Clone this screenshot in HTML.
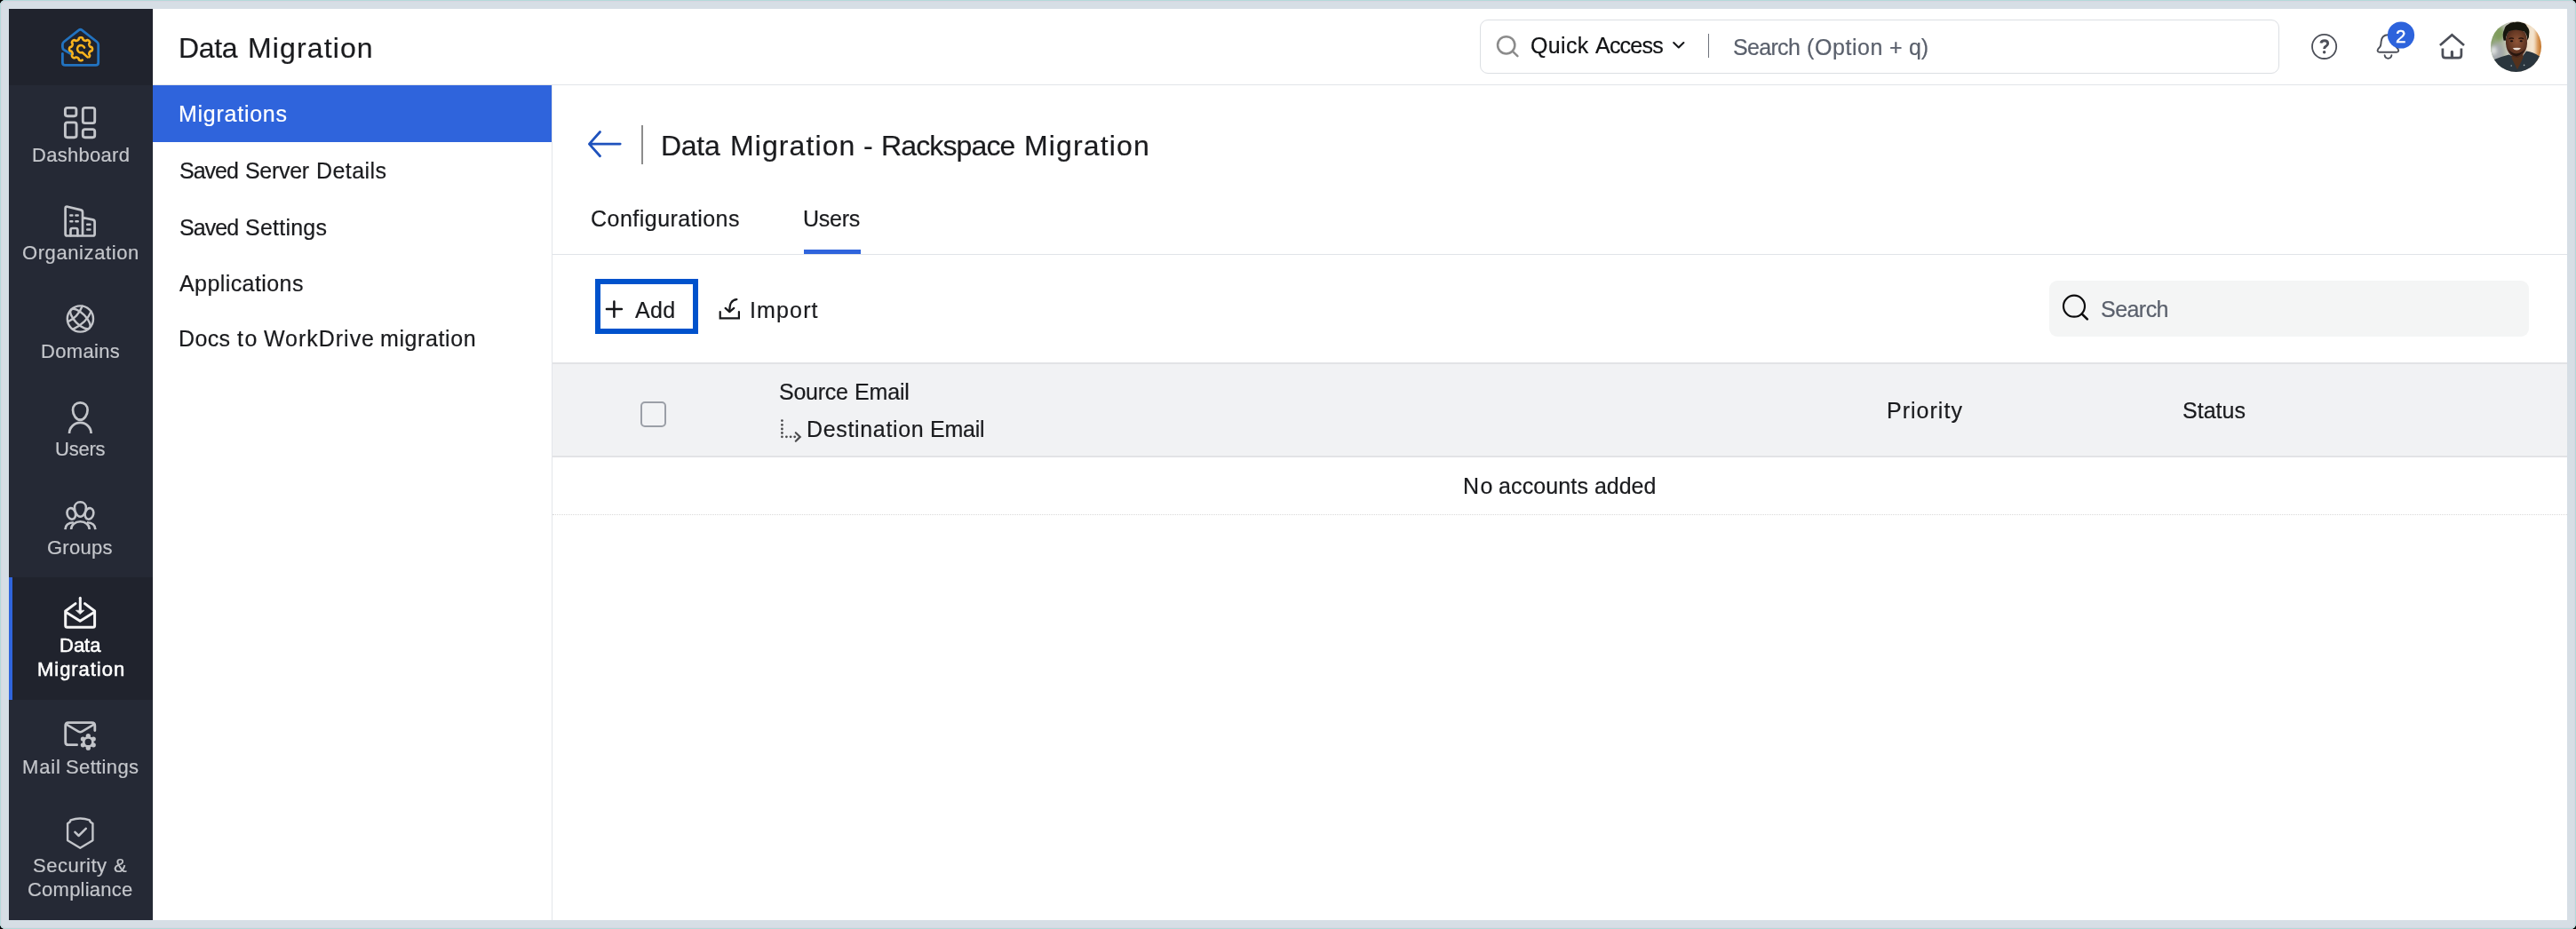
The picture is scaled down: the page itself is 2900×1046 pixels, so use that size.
<!DOCTYPE html>
<html lang="en"><head><meta charset="utf-8"><title>Data Migration - Zoho Mail Admin Console</title>
<style>
html,body{margin:0;padding:0;}
html{background:#000;}
body{position:relative;width:2900px;height:1046px;overflow:hidden;background:#000;font-family:"Liberation Sans",sans-serif;}
div,svg{position:absolute;box-sizing:border-box;}
svg{overflow:visible;}
.t{will-change:transform;-webkit-text-stroke:0.2px currentColor;white-space:pre;font-family:"Liberation Sans",sans-serif;font-weight:400;}
#frame{left:0;top:0;width:2900px;height:1046px;background:#d6dee5;border-radius:6px;box-shadow:inset 0 0 0 1px #b3dad9, inset 0 0 0 2px #d8d6e1;}
#app{left:10px;top:10px;width:2880px;height:1026px;background:#fff;}
#sidebar{left:10px;top:10px;width:162px;height:1026px;background:#252935;}
#logo{left:10px;top:10px;width:162px;height:86px;background:#20232d;}
#active{left:10px;top:650px;width:162px;height:138px;background:#20232d;}
#activebar{left:10px;top:650px;width:4px;height:138px;background:#2f64dc;}
#hdrline{left:172px;top:95px;width:2718px;height:1px;background:#e1e4e8;}
#navsel{left:172px;top:96px;width:449px;height:64px;background:#2f64dc;}
#navline{left:621px;top:96px;width:1px;height:940px;background:#e3e6ea;}
#qbox{left:1666px;top:22px;width:900px;height:61px;border:1px solid #dcdfe3;border-radius:9px;background:#fff;}
#qdiv{left:1923px;top:38px;width:1.4px;height:27px;background:#70737c;}
#avatar{left:2804px;top:24px;width:57px;height:57px;border-radius:50%;overflow:hidden;}
#tdiv{left:722px;top:141px;width:2px;height:44px;background:#8c8c8c;}
#tabline{left:622px;top:286px;width:2268px;height:1px;background:#e1e4e8;}
#tabsel{left:905px;top:281px;width:64px;height:5px;background:#2f64dc;}
#addbox{left:670px;top:314px;width:116px;height:62px;border:6px solid #0052cc;}
#sbox{left:2307px;top:316px;width:540px;height:63px;background:#f4f5f5;border-radius:9px;}
#thead{left:622px;top:408px;width:2268px;height:107px;background:#f1f2f4;border-top:2px solid #e2e3e6;border-bottom:2px solid #e2e3e6;}
#cb{left:721px;top:452px;width:28.5px;height:28.5px;border:2px solid #9b9fa7;border-radius:5px;background:#f2f3f5;}
#rowline{left:622px;top:579px;width:2268px;height:0;border-top:1px dotted #d9d9d9;}

</style></head>
<body>
<div id="frame"></div>
<div id="app"></div>
<div id="sidebar"></div>
<div id="logo"></div>
<div id="active"></div>
<div id="activebar"></div>
<div id="hdrline"></div>
<div id="navsel"></div>
<div id="navline"></div>
<div id="qbox"></div>
<div id="qdiv"></div>
<div id="tdiv"></div>
<div id="tabline"></div>
<div id="tabsel"></div>
<div id="addbox"></div>
<div id="sbox"></div>
<div id="thead"></div>
<div id="cb"></div>
<div id="rowline"></div>

<svg id="sbicons" style="left:0;top:0" width="180" height="1046" viewBox="0 0 180 1046" fill="none" stroke-linecap="round" stroke-linejoin="round">
<g stroke="#2273c0" stroke-width="2.8"><path d="M79.6 60.6 L72.2 56.3 Q70.4 55.2 70.4 53.0 L70.4 50.2 Q70.4 48.2 72.0 47.0 L88.8 33.9 Q90.5 32.6 92.2 33.9 L109.0 47.0 Q110.7 48.3 110.7 50.3 L110.7 70.4 Q110.7 73.4 107.7 73.4 L73.4 73.4 Q70.4 73.4 70.4 70.4 L70.4 60.4"/></g>
<g stroke="#f9b31e" stroke-width="2.6"><path d="M92.75 67.67 L92.59 67.78 L92.42 67.87 L92.25 67.95 L92.07 68.02 L91.89 68.08 L91.72 68.12 L91.54 68.16 L91.35 68.18 L91.17 68.20 L90.99 68.20 L90.81 68.19 L90.62 68.18 L90.44 68.15 L90.26 68.12 L90.08 68.07 L89.91 68.01 L89.73 67.95 L89.56 67.86 L89.39 67.77 L89.23 67.66 L89.07 67.53 L88.92 67.37 L88.78 67.16 L88.74 66.51 L88.65 66.15 L88.53 65.95 L88.41 65.79 L88.29 65.65 L88.16 65.53 L88.04 65.42 L87.91 65.32 L87.79 65.23 L87.66 65.14 L87.53 65.06 L87.40 64.99 L87.27 64.92 L87.14 64.86 L87.00 64.80 L86.87 64.75 L86.73 64.70 L86.59 64.66 L86.44 64.62 L86.30 64.59 L86.15 64.56 L85.99 64.54 L85.83 64.52 L85.66 64.51 L85.49 64.51 L85.30 64.52 L85.10 64.55 L84.87 64.63 L84.37 65.08 L84.05 65.25 L83.82 65.28 L83.60 65.28 L83.40 65.26 L83.21 65.22 L83.02 65.16 L82.85 65.09 L82.68 65.02 L82.51 64.93 L82.35 64.83 L82.20 64.73 L82.06 64.62 L81.92 64.50 L81.79 64.37 L81.66 64.24 L81.55 64.10 L81.44 63.95 L81.33 63.80 L81.24 63.64 L81.16 63.47 L81.08 63.30 L81.02 63.12 L80.97 62.93 L80.93 62.74 L80.91 62.53 L80.92 62.31 L80.98 62.06 L81.44 61.55 L81.61 61.25 L81.66 61.03 L81.68 60.84 L81.69 60.66 L81.69 60.48 L81.68 60.32 L81.66 60.16 L81.63 60.01 L81.60 59.86 L81.57 59.71 L81.53 59.57 L81.48 59.42 L81.43 59.29 L81.38 59.15 L81.32 59.02 L81.26 58.89 L81.19 58.76 L81.11 58.63 L81.03 58.50 L80.94 58.37 L80.85 58.25 L80.74 58.12 L80.63 58.00 L80.51 57.87 L80.36 57.75 L80.20 57.63 L79.97 57.52 L79.27 57.49 L78.96 57.38 L78.77 57.24 L78.63 57.08 L78.50 56.92 L78.40 56.76 L78.31 56.59 L78.23 56.41 L78.17 56.24 L78.11 56.06 L78.07 55.88 L78.04 55.70 L78.02 55.52 L78.00 55.33 L78.00 55.15 L78.01 54.97 L78.03 54.79 L78.05 54.61 L78.09 54.43 L78.14 54.25 L78.20 54.07 L78.27 53.90 L78.35 53.73 L78.45 53.56 L78.56 53.39 L78.70 53.24 L78.86 53.09 L79.09 52.96 L79.81 52.93 L80.10 52.83 L80.29 52.71 L80.44 52.59 L80.57 52.46 L80.69 52.34 L80.80 52.21 L80.90 52.09 L80.99 51.96 L81.07 51.83 L81.15 51.71 L81.22 51.58 L81.29 51.45 L81.35 51.31 L81.41 51.18 L81.46 51.04 L81.51 50.90 L81.55 50.76 L81.59 50.62 L81.62 50.47 L81.65 50.31 L81.67 50.16 L81.68 50.00 L81.69 49.83 L81.69 49.65 L81.67 49.46 L81.64 49.26 L81.55 49.01 L81.06 48.49 L80.94 48.20 L80.91 47.97 L80.92 47.76 L80.95 47.56 L80.99 47.37 L81.05 47.19 L81.12 47.01 L81.20 46.84 L81.29 46.68 L81.39 46.52 L81.49 46.37 L81.61 46.23 L81.73 46.09 L81.85 45.96 L81.99 45.84 L82.13 45.72 L82.28 45.62 L82.43 45.52 L82.60 45.42 L82.76 45.34 L82.94 45.27 L83.12 45.21 L83.31 45.16 L83.50 45.13 L83.71 45.11 L83.94 45.13 L84.20 45.21 L84.73 45.70 L84.99 45.82 L85.21 45.87 L85.40 45.89 L85.58 45.89 L85.75 45.89 L85.91 45.87 L86.07 45.85 L86.22 45.83 L86.37 45.80 L86.52 45.76 L86.66 45.72 L86.80 45.67 L86.94 45.62 L87.08 45.57 L87.21 45.51 L87.34 45.44 L87.47 45.37 L87.60 45.29 L87.73 45.21 L87.85 45.12 L87.98 45.03 L88.11 44.92 L88.23 44.81 L88.35 44.68 L88.48 44.53 L88.59 44.36 L88.70 44.11 L88.72 43.38 L88.85 43.12 L88.99 42.94 L89.15 42.80 L89.31 42.68 L89.48 42.58 L89.65 42.49 L89.82 42.42 L90.00 42.36 L90.18 42.30 L90.36 42.26 L90.54 42.23 L90.72 42.21 L90.90 42.20 L91.08 42.20 L91.27 42.21 L91.45 42.23 L91.63 42.26 L91.81 42.30 L91.99 42.35 L92.16 42.41 L92.34 42.49 L92.51 42.57 L92.67 42.67 L92.84 42.79 L92.99 42.93 L93.14 43.10 L93.27 43.35 L93.29 44.08 L93.40 44.34 L93.51 44.52 L93.64 44.67 L93.76 44.80 L93.88 44.91 L94.01 45.02 L94.14 45.12 L94.26 45.21 L94.39 45.29 L94.52 45.37 L94.65 45.44 L94.78 45.50 L94.91 45.56 L95.05 45.62 L95.19 45.67 L95.33 45.72 L95.47 45.76 L95.61 45.79 L95.76 45.83 L95.92 45.85 L96.07 45.87 L96.24 45.89 L96.41 45.89 L96.59 45.89 L96.78 45.87 L96.99 45.83 L97.25 45.72 L97.78 45.22 L98.05 45.13 L98.27 45.11 L98.48 45.13 L98.68 45.16 L98.87 45.20 L99.05 45.27 L99.22 45.34 L99.39 45.42 L99.55 45.51 L99.71 45.61 L99.86 45.71 L100.00 45.83 L100.13 45.95 L100.26 46.08 L100.39 46.22 L100.50 46.36 L100.61 46.51 L100.70 46.67 L100.79 46.83 L100.87 47.00 L100.94 47.17 L101.00 47.36 L101.05 47.54 L101.08 47.74 L101.09 47.95 L101.06 48.18 L100.96 48.46 L100.46 48.99 L100.37 49.24 L100.33 49.45 L100.31 49.64 L100.31 49.81 L100.32 49.98 L100.33 50.14 L100.35 50.30 L100.38 50.45 L100.41 50.60 L100.45 50.75 L100.49 50.89 L100.54 51.03 L100.59 51.17 L100.64 51.30 L100.70 51.43 L100.77 51.57 L100.84 51.70 L100.92 51.82 L101.01 51.95 L101.10 52.08 L101.19 52.20 L101.30 52.33 L101.42 52.45 L101.55 52.58 L101.70 52.70 L101.88 52.82 L102.16 52.92 L102.88 52.95 L103.12 53.08 L103.29 53.23 L103.43 53.38 L103.54 53.54 L103.64 53.71 L103.72 53.88 L103.80 54.06 L103.86 54.23 L103.91 54.41 L103.94 54.59 L103.97 54.77 L103.99 54.96 L104.00 55.14 L104.00 55.32 L103.99 55.50 L103.96 55.68 L103.93 55.87 L103.89 56.04 L103.84 56.22 L103.77 56.40 L103.70 56.57 L103.61 56.74 L103.51 56.91 L103.39 57.07 L103.24 57.22 L103.06 57.37 L102.77 57.49 L102.05 57.51 L101.82 57.62 L101.65 57.74 L101.51 57.86 L101.38 57.98 L101.27 58.11 L101.16 58.24 L101.07 58.36 L100.98 58.49 L100.90 58.62 L100.82 58.75 L100.75 58.88 L100.68 59.01 L100.62 59.14 L100.57 59.28 L100.52 59.41 L100.47 59.55 L100.43 59.70 L100.40 59.84 L100.37 59.99 L100.34 60.15 L100.32 60.31 L100.31 60.47 L100.31 60.64 L100.31 60.82 L100.34 61.02 L100.39 61.23 L100.53 61.52 L101.01 62.04 L101.07 62.29 L101.09 62.51 L101.07 62.72 L101.03 62.92 L100.98 63.10 L100.92 63.28 L100.85 63.46 L100.77 63.62 L100.67 63.78 L100.57 63.94 L100.46 64.09 L100.35 64.23"/><path d="M95.0 53.6 A4.1 4.1 0 1 0 92.6 59.0 L98.6 64.4"/></g>
<g stroke="#c3c5ca" stroke-width="2.9"><rect x="73.4" y="121.4" width="12.5" height="9.3" rx="2.4"/><rect x="93.3" y="121.4" width="13.4" height="17.2" rx="2.4"/><rect x="73.4" y="137.9" width="12.7" height="16.8" rx="2.4"/><rect x="93.3" y="145.6" width="13.4" height="9.1" rx="2.4"/></g>
<g stroke="#c3c5ca" stroke-width="2.7"><path d="M93.0 265.5 L75.6 265.5 Q73.6 265.5 73.6 263.5 L73.6 234.6 Q73.6 232.2 76.0 232.8 L91.0 236.4 Q93.0 236.9 93.0 239.0 L93.0 265.5 L104.6 265.5 Q106.6 265.5 106.6 263.5 L106.6 249.9 Q106.6 247.9 104.6 247.4 L93.0 245.0"/><path d="M79.5 265.2 L79.5 259.0 Q79.5 257.0 81.5 257.0 L85.4 257.0 Q87.4 257.0 87.4 259.0 L87.4 265.2"/></g><g stroke="#c3c5ca" stroke-width="2.5"><path d="M79.3 242.6H81.4M85.4 242.6H87.7M79.3 249.2H81.4M85.4 249.2H87.7M98.2 252.7H101.4M98.2 258.4H101.4"/></g>
<g stroke="#c3c5ca" stroke-width="2.4"><circle cx="90.4" cy="359.0" r="14.6"/><ellipse cx="90.4" cy="359.0" rx="14.6" ry="6.1" transform="rotate(45 90.4 359.0)"/><path d="M76.6 362.2 Q87.5 357.5 92.6 344.8"/><path d="M81.8 370.8 Q97.5 363.5 102.6 350.6"/></g>
<g stroke="#c3c5ca" stroke-width="2.7" stroke-linecap="butt"><path d="M90.3 453.3 C95.2 453.3 98.6 456.8 98.6 461.6 C98.6 467.4 94.6 472.7 90.3 472.7 C86.0 472.7 82.0 467.4 82.0 461.6 C82.0 456.8 85.4 453.3 90.3 453.3 Z"/><path d="M78.0 488.1 A12.3 12.2 0 0 1 102.6 488.1"/></g>
<g stroke="#c3c5ca" stroke-width="2.6" stroke-linecap="butt"><ellipse cx="80.3" cy="578.4" rx="4.7" ry="6.4" transform="rotate(-14 80.3 578.4)"/><ellipse cx="100.5" cy="578.4" rx="4.7" ry="6.4" transform="rotate(14 100.5 578.4)"/><path d="M90.4 565.2 C94.2 565.2 96.9 568.0 96.9 571.6 C96.9 576.6 93.7 581.8 90.4 581.8 C87.1 581.8 83.9 576.6 83.9 571.6 C83.9 568.0 86.6 565.2 90.4 565.2 Z" fill="#252935"/><path d="M80.1 596.1 A10.3 8.9 0 0 1 100.7 596.1"/><path d="M73.4 596.1 Q73.9 588.6 82.8 588.3"/><path d="M107.4 596.1 Q106.9 588.6 98.0 588.3"/></g>
<g stroke="#f5f5f6" stroke-width="3"><path d="M85.0 679.6 L73.7 688.0 L73.7 704.3 Q73.7 706.3 75.7 706.3 L104.6 706.3 Q106.6 706.3 106.6 704.3 L106.6 688.0 L95.5 679.6"/><path d="M74.6 689.4 L90.2 699.2 L105.8 689.4"/><path d="M90.3 673.3 L90.3 686.5"/></g><path d="M85.6 687.2 L95.0 687.2 L90.3 691.4 Z" fill="#f5f5f6" stroke="#f5f5f6" stroke-width="0.6"/>
<g stroke="#c3c5ca" stroke-width="2.8"><path d="M106.8 822.6 L106.8 816.9 Q106.8 813.6 103.5 813.6 L77.0 813.6 Q73.7 813.6 73.7 816.9 L73.7 835.4 Q73.7 838.7 77.0 838.7 L86.6 838.7"/><path d="M75.6 816.2 L88.2 823.6 Q90.3 824.8 92.4 823.6 L105.0 816.2" stroke-width="2.6"/></g><g fill="#c3c5ca" stroke="none"><circle cx="99.30" cy="828.55" r="2.6"/><circle cx="105.23" cy="831.98" r="2.6"/><circle cx="105.23" cy="838.82" r="2.6"/><circle cx="99.30" cy="842.25" r="2.6"/><circle cx="93.37" cy="838.82" r="2.6"/><circle cx="93.37" cy="831.98" r="2.6"/><circle cx="99.3" cy="835.4" r="6.4"/></g><circle cx="99.3" cy="835.4" r="3.7" fill="#252935"/>
<g stroke="#c3c5ca" stroke-width="2.4"><path d="M76.1 927.1 Q79.0 926.2 79.6 923.3 Q90.2 919.6 100.8 923.3 Q101.4 926.2 104.4 927.1 L104.4 946.3 L90.25 954.7 L76.1 946.3 Z"/><path d="M84.4 936.9 L88.6 941.0 L96.8 932.9" stroke-width="2.5"/></g>
</svg>
<svg id="hdricons" style="left:1660px;top:10px" width="1230" height="86" viewBox="1660 10 1230 86" fill="none" stroke-linecap="round" stroke-linejoin="round">
<g stroke="#8b8b8b" stroke-width="2.5"><circle cx="1695.7" cy="50.8" r="9.65"/><path d="M1702.7 57.6 L1708.4 63.2"/></g>
<path d="M1884.2 48.0 L1889.8 53.4 L1895.4 48.0" stroke="#16171a" stroke-width="2.1"/>
<circle cx="2616.6" cy="52.4" r="13.6" stroke="#4c4f58" stroke-width="1.8"/>
<path d="M2612.9 48.6 Q2613.4 45.8 2616.9 45.8 Q2620.6 45.8 2620.6 48.9 Q2620.6 50.8 2618.6 52.0 Q2616.6 53.2 2616.6 55.0" stroke="#4c4f58" stroke-width="2.9" stroke-linecap="butt"/>
<circle cx="2616.6" cy="58.7" r="1.75" fill="#4c4f58"/>
<g stroke="#4c4f58" stroke-width="1.9"><path d="M2688.4 39.2 Q2681.2 39.2 2680.6 47.0 Q2680.4 51.4 2679.4 52.6 L2677.2 55.2 Q2676.2 56.6 2676.8 57.8 Q2677.4 58.8 2679.0 58.8 L2697.8 58.8 Q2699.4 58.8 2700.0 57.8 Q2700.6 56.6 2699.6 55.2 L2697.4 52.6 Q2696.4 51.4 2696.2 47.0 Q2695.6 39.2 2688.4 39.2 Z"/><path d="M2684.6 62.2 Q2685.2 65.8 2688.5 65.8 Q2691.8 65.8 2692.4 62.2"/></g>
<circle cx="2703.0" cy="39.5" r="15.1" fill="#2d63dc"/>
<g stroke="#4c4f58" stroke-width="2.7"><path d="M2746.9 51.0 L2760.4 39.3 L2774.0 51.0" stroke-linecap="butt" stroke-linejoin="miter"/><path d="M2749.9 54.6 L2749.9 62.0 Q2749.9 65.2 2753.1 65.2 L2767.7 65.2 Q2770.9 65.2 2770.9 62.0 L2770.9 54.6" stroke-linecap="butt"/><path d="M2760.4 58.4 L2760.4 64.6" stroke-width="3.2"/></g>
</svg>
<div id="avatar"><svg style="left:0;top:0" width="57" height="57" viewBox="0 0 57 57">
<defs>
<linearGradient id="avbg" x1="0" x2="1" y1="0" y2="0"><stop offset="0" stop-color="#86a067"/><stop offset="0.2" stop-color="#a7b09a"/><stop offset="0.36" stop-color="#c9c9bf"/><stop offset="0.62" stop-color="#e6dccb"/><stop offset="0.84" stop-color="#efd9bb"/><stop offset="0.93" stop-color="#d9995a"/><stop offset="1" stop-color="#c27428"/></linearGradient>
<radialGradient id="avface" cx="0.52" cy="0.42" r="0.62"><stop offset="0" stop-color="#8f5538"/><stop offset="0.55" stop-color="#6a3b26"/><stop offset="1" stop-color="#40231a"/></radialGradient>
<filter id="avblur" x="-20%" y="-20%" width="140%" height="140%"><feGaussianBlur stdDeviation="0.55"/></filter>
<filter id="avblur2" x="-20%" y="-20%" width="140%" height="140%"><feGaussianBlur stdDeviation="2.2"/></filter>
</defs>
<rect width="57" height="57" fill="url(#avbg)"/>
<g filter="url(#avblur2)"><ellipse cx="6" cy="36" rx="9" ry="11" fill="#a5a9ad"/><ellipse cx="3" cy="33" rx="3.5" ry="4.5" fill="#e3e6e4"/><ellipse cx="9" cy="14" rx="6" ry="8" fill="#7f9c5c"/><rect x="44" y="6" width="5" height="34" fill="#f4e6d2"/></g>
<g filter="url(#avblur)">
<path d="M4 43 Q12 39.5 20.5 37.4 L24 39 L36 39 L40 33.6 Q48 34.6 55 39.4 L57 57 L0 57 Z" fill="#2a363d"/>
<path d="M24 36 L23.6 41.5 L30 54.5 L36.4 41 L36.4 34 Z" fill="#55301f"/>
<path d="M17 25 Q16.5 13 22 10.5 Q29 8 36 10.5 Q41.3 13 41 25 Q40.5 33 36 37.4 Q32 40.8 29 40.8 Q25.6 40.8 22 37.4 Q17.6 33 17 25 Z" fill="url(#avface)"/>
<path d="M19.6 31 Q22 38 29 39.6 Q36 38 38.6 30.6 Q36 35.6 29 36.6 Q22.4 35.8 19.6 31Z" fill="#26140f"/>
<path d="M14.6 21.5 Q12.6 14 15.4 9 Q16 5.5 19.6 3.6 Q22.4 0.6 27 1.2 Q31 -0.4 35 1.6 Q39.4 2 41 6 Q44.2 9.4 43.2 14 Q43.6 18.4 41.2 21.6 Q41 14.6 37.6 11.4 Q29 8.2 21 11.2 Q17 14.4 16.8 21.8 Z" fill="#181411"/>
<path d="M20.6 19.7 Q23 18.2 26 19.5 M31.4 19.5 Q34.4 18.2 37 19.7" stroke="#1d110c" stroke-width="1.3" fill="none"/>
<ellipse cx="23.6" cy="22.2" rx="1.6" ry="1" fill="#170d0a"/><ellipse cx="34.2" cy="22.2" rx="1.6" ry="1" fill="#170d0a"/>
<path d="M24.8 30.0 Q29.4 29.4 34.0 29.9 Q32.4 32.6 29.3 32.6 Q26.2 32.6 24.8 30.0Z" fill="#e9ded6"/>
<circle cx="23.2" cy="50" r="0.8" fill="#a9b3b6"/><circle cx="37.6" cy="49.4" r="0.8" fill="#a9b3b6"/>
</g>
</svg></div>
<svg id="mainicons" style="left:622px;top:96px" width="2268" height="500" viewBox="622 96 2268 500" fill="none" stroke-linecap="round" stroke-linejoin="round">
<path d="M698.2 162.1 L663.6 162.1 M675.5 148.5 L663.4 162.1 L675.5 175.7" stroke="#1f52bd" stroke-width="2.8"/>
<path d="M682.9 347.9 L699.9 347.9 M691.4 339.5 L691.4 356.8" stroke="#141518" stroke-width="2.5"/>
<g stroke="#17181b" stroke-width="2.2"><path d="M810.7 351.0 L810.7 358.3 L831.9 358.3 L831.9 351.0" stroke-linejoin="miter"/><path d="M829.4 337.1 Q821.0 337.6 821.3 350.6"/><path d="M816.6 346.9 L821.3 351.1 L826.3 346.9"/></g>
<g stroke="#0d0d0e"><circle cx="2335.0" cy="344.7" r="12.0" stroke-width="2.2"/><path d="M2343.9 353.6 L2349.8 359.4" stroke-width="2.7"/></g>
<g fill="#4b4b4d"><circle cx="880.4" cy="473.6" r="1.4"/><circle cx="880.4" cy="478.3" r="1.4"/><circle cx="880.4" cy="483.0" r="1.4"/><circle cx="880.4" cy="487.5" r="1.4"/><circle cx="880.4" cy="491.8" r="1.4"/><circle cx="885.4" cy="491.8" r="1.4"/><circle cx="890.1" cy="491.8" r="1.4"/><circle cx="894.7" cy="491.8" r="1.4"/></g><path d="M895.8 487.2 L900.7 491.9 L895.8 496.7" stroke="#4b4b4d" stroke-width="2.2" stroke-linejoin="miter"/>
</svg>
<!-- text -->
<div class="t" style="left:35.60px;top:164px;font-size:22px;line-height:22px;letter-spacing:0.289px;color:#c4c6cb;">Dashboard</div>
<div class="t" style="left:24.80px;top:274px;font-size:22px;line-height:22px;letter-spacing:0.591px;color:#c4c6cb;">Organization</div>
<div class="t" style="left:45.90px;top:385px;font-size:22px;line-height:22px;letter-spacing:0.332px;color:#c4c6cb;">Domains</div>
<div class="t" style="left:61.70px;top:495px;font-size:22px;line-height:22px;letter-spacing:-0.237px;color:#c4c6cb;">Users</div>
<div class="t" style="left:53.10px;top:606px;font-size:22px;line-height:22px;letter-spacing:0.251px;color:#c4c6cb;">Groups</div>
<div class="t" style="left:66.60px;top:716px;font-size:22px;line-height:22px;letter-spacing:-0.012px;color:#ffffff;-webkit-text-stroke:0.55px #fff;">Data</div>
<div class="t" style="left:41.80px;top:743px;font-size:22px;line-height:22px;letter-spacing:0.957px;color:#ffffff;-webkit-text-stroke:0.55px #fff;">Migration</div>
<div class="t" style="left:24.60px;top:853px;font-size:22px;line-height:22px;letter-spacing:0.817px;color:#c4c6cb;">Mail</div>
<div class="t" style="left:73.90px;top:853px;font-size:22px;line-height:22px;letter-spacing:0.358px;color:#c4c6cb;">Settings</div>
<div class="t" style="left:37.10px;top:964px;font-size:22px;line-height:22px;letter-spacing:0.504px;color:#c4c6cb;">Security</div>
<div class="t" style="left:127.50px;top:964px;font-size:22px;line-height:22px;letter-spacing:-0.100px;color:#c4c6cb;">&amp;</div>
<div class="t" style="left:31.00px;top:991px;font-size:22px;line-height:22px;letter-spacing:0.230px;color:#c4c6cb;">Compliance</div>
<div class="t" style="left:201.10px;top:38px;font-size:32px;line-height:32px;letter-spacing:-0.332px;color:#1a1b1e;">Data</div>
<div class="t" style="left:278.80px;top:38px;font-size:32px;line-height:32px;letter-spacing:1.123px;color:#1a1b1e;">Migration</div>
<div class="t" style="left:1723.00px;top:39px;font-size:25px;line-height:25px;letter-spacing:0.324px;color:#111214;">Quick</div>
<div class="t" style="left:1796.30px;top:39px;font-size:25px;line-height:25px;letter-spacing:-0.776px;color:#111214;">Access</div>
<div class="t" style="left:1951.10px;top:41px;font-size:25px;line-height:25px;letter-spacing:-0.682px;color:#5a606c;">Search</div>
<div class="t" style="left:2034.20px;top:41px;font-size:25px;line-height:25px;letter-spacing:0.587px;color:#5a606c;">(Option</div>
<div class="t" style="left:2126.90px;top:41px;font-size:25px;line-height:25px;letter-spacing:-0.300px;color:#5a606c;">+</div>
<div class="t" style="left:2148.90px;top:41px;font-size:25px;line-height:25px;letter-spacing:-0.204px;color:#5a606c;">q)</div>
<div class="t" style="left:201.00px;top:116px;font-size:25px;line-height:25px;letter-spacing:0.742px;color:#ffffff;">Migrations</div>
<div class="t" style="left:201.60px;top:180px;font-size:25px;line-height:25px;letter-spacing:-0.996px;color:#1a1b1e;">Saved</div>
<div class="t" style="left:276.10px;top:180px;font-size:25px;line-height:25px;letter-spacing:-0.302px;color:#1a1b1e;">Server</div>
<div class="t" style="left:355.70px;top:180px;font-size:25px;line-height:25px;letter-spacing:0.447px;color:#1a1b1e;">Details</div>
<div class="t" style="left:201.60px;top:244px;font-size:25px;line-height:25px;letter-spacing:-0.921px;color:#1a1b1e;">Saved</div>
<div class="t" style="left:275.80px;top:244px;font-size:25px;line-height:25px;letter-spacing:0.238px;color:#1a1b1e;">Settings</div>
<div class="t" style="left:202.20px;top:307px;font-size:25px;line-height:25px;letter-spacing:0.418px;color:#1a1b1e;">Applications</div>
<div class="t" style="left:200.60px;top:369px;font-size:25px;line-height:25px;letter-spacing:0.381px;color:#1a1b1e;">Docs</div>
<div class="t" style="left:267.23px;top:369px;font-size:25px;line-height:25px;letter-spacing:1.500px;color:#1a1b1e;">to</div>
<div class="t" style="left:297.10px;top:369px;font-size:25px;line-height:25px;letter-spacing:0.974px;color:#1a1b1e;">WorkDrive</div>
<div class="t" style="left:427.70px;top:369px;font-size:25px;line-height:25px;letter-spacing:0.610px;color:#1a1b1e;">migration</div>
<div class="t" style="left:743.80px;top:148px;font-size:32px;line-height:32px;letter-spacing:-0.299px;color:#1a1b1e;">Data</div>
<div class="t" style="left:821.70px;top:148px;font-size:32px;line-height:32px;letter-spacing:1.098px;color:#1a1b1e;">Migration</div>
<div class="t" style="left:971.60px;top:148px;font-size:32px;line-height:32px;letter-spacing:-0.600px;color:#1a1b1e;">-</div>
<div class="t" style="left:991.90px;top:148px;font-size:32px;line-height:32px;letter-spacing:-0.863px;color:#1a1b1e;">Rackspace</div>
<div class="t" style="left:1152.80px;top:148px;font-size:32px;line-height:32px;letter-spacing:1.148px;color:#1a1b1e;">Migration</div>
<div class="t" style="left:665.00px;top:234px;font-size:25px;line-height:25px;letter-spacing:0.484px;color:#1a1b1e;">Configurations</div>
<div class="t" style="left:904.20px;top:234px;font-size:25px;line-height:25px;letter-spacing:-0.271px;color:#1a1b1e;">Users</div>
<div class="t" style="left:715.00px;top:337px;font-size:25px;line-height:25px;letter-spacing:0.361px;color:#1a1b1e;">Add</div>
<div class="t" style="left:843.70px;top:337px;font-size:25px;line-height:25px;letter-spacing:1.139px;color:#1a1b1e;">Import</div>
<div class="t" style="left:2365.20px;top:336px;font-size:25px;line-height:25px;letter-spacing:-0.542px;color:#5a606c;">Search</div>
<div class="t" style="left:877.20px;top:429px;font-size:25px;line-height:25px;letter-spacing:-0.262px;color:#1a1b1e;">Source</div>
<div class="t" style="left:961.90px;top:429px;font-size:25px;line-height:25px;letter-spacing:-0.165px;color:#1a1b1e;">Email</div>
<div class="t" style="left:908.30px;top:471px;font-size:25px;line-height:25px;letter-spacing:0.663px;color:#1a1b1e;">Destination</div>
<div class="t" style="left:1047.30px;top:471px;font-size:25px;line-height:25px;letter-spacing:-0.240px;color:#1a1b1e;">Email</div>
<div class="t" style="left:2123.70px;top:450px;font-size:25px;line-height:25px;letter-spacing:1.017px;color:#1a1b1e;">Priority</div>
<div class="t" style="left:2457.10px;top:450px;font-size:25px;line-height:25px;letter-spacing:0.005px;color:#1a1b1e;">Status</div>
<div class="t" style="left:1646.62px;top:535px;font-size:25px;line-height:25px;letter-spacing:1.500px;color:#1a1b1e;">No</div>
<div class="t" style="left:1686.90px;top:535px;font-size:25px;line-height:25px;letter-spacing:0.120px;color:#1a1b1e;">accounts</div>
<div class="t" style="left:1795.00px;top:535px;font-size:25px;line-height:25px;letter-spacing:-0.054px;color:#1a1b1e;">added</div>
<div class="t" style="left:2696.90px;top:31px;font-size:20.5px;line-height:20.5px;letter-spacing:0.300px;color:#ffffff;-webkit-text-stroke:0.5px #fff;">2</div>
</body></html>
